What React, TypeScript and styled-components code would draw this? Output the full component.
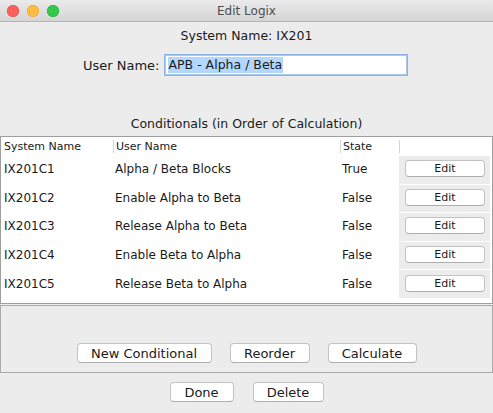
import React from 'react';
import styled, { createGlobalStyle } from 'styled-components';

const GlobalStyle = createGlobalStyle`
  html, body {
    margin: 0;
    padding: 0;
    background: #ececec;
  }
  body {
    font-family: "DejaVu Sans", "Liberation Sans", sans-serif;
    font-size: 12px;
    color: #1a1a1a;
  }
`;

const Window = styled.div`
  width: 493px;
  height: 413px;
  display: flex;
  flex-direction: column;
  background: #ececec;
  overflow: hidden;
`;

const TitleBar = styled.div`
  height: 21px;
  flex: none;
  display: flex;
  align-items: center;
  position: relative;
  background: linear-gradient(#ebebeb, #d5d5d5);
  border-bottom: 1px solid #b4b4b4;
`;

const Lights = styled.div`
  display: flex;
  gap: 8px;
  padding-left: 7px;
`;

const Light = styled.span<{ color: string; edge: string }>`
  width: 12px;
  height: 12px;
  border-radius: 50%;
  background: ${p => p.color};
  box-shadow: inset 0 0 0 0.5px ${p => p.edge};
`;

const Title = styled.div`
  position: absolute;
  left: 0;
  right: 0;
  text-align: center;
  font-size: 12px;
  color: #4d4d4d;
`;

const Body = styled.div`
  flex: 1;
  display: flex;
  flex-direction: column;
`;

const CenterLine = styled.div<{ top: number; height: number }>`
  margin-top: ${p => p.top}px;
  height: ${p => p.height}px;
  display: flex;
  align-items: center;
  justify-content: center;
  font-size: 12.5px;
`;

const NameRow = styled.div`
  margin-top: 11px;
  height: 20px;
  display: flex;
  align-items: center;
  padding-left: 83px;
  gap: 5px;
  font-size: 13px;
`;

const NameInput = styled.div`
  width: 236px;
  height: 16px;
  background: #fff;
  border: 1px solid #a9c9ec;
  box-shadow: 0 0 0 1px #8bb4e6;
  padding: 1px 2px;
  display: flex;
  align-items: center;
`;

const Selected = styled.span`
  background: #b3d7ff;
  line-height: 16px;
  padding: 0 1px;
  font-size: 12.5px;
`;

const TableBox = styled.div`
  margin-top: 5px;
  height: 166px;
  background: #fff;
  border: 1px solid #9e9e9e;
  display: flex;
  flex-direction: column;
`;

const Cols = '112px 227px 59px 1fr';

const HeaderRow = styled.div`
  display: grid;
  grid-template-columns: ${Cols};
  height: 18px;
  font-size: 11px;
  align-items: center;
`;

const HeadCell = styled.div<{ first?: boolean }>`
  height: 13px;
  line-height: 13px;
  padding-left: ${p => (p.first ? 3 : 2)}px;
  border-left: ${p => (p.first ? 'none' : '1px solid #d4d4d4')};
`;

const Row = styled.div`
  display: grid;
  grid-template-columns: ${Cols};
  height: 28.6px;
  font-size: 12px;
  align-items: center;
`;

const Cell = styled.div<{ first?: boolean }>`
  padding-left: ${p => (p.first ? 3 : 2)}px;
  white-space: nowrap;
`;

const ButtonCell = styled.div`
  align-self: stretch;
  background: #ececec;
  border-top: 1px solid #fff;
  margin-right: 2px;
  display: flex;
  align-items: center;
  padding-left: 6px;
`;

const Button = styled.button<{ w: number }>`
  width: ${p => p.w}px;
  height: 20px;
  background: #fff;
  border: 1px solid #c3c3c3;
  border-bottom-color: #adadad;
  border-radius: 4px;
  font-family: inherit;
  font-size: 13px;
  color: #1a1a1a;
  padding: 0;
`;

const EditButton = styled(Button)`
  height: 17px;
  font-size: 11px;
  margin-top: -2px;
`;

const ActionPanel = styled.div`
  margin-top: 1px;
  height: 68px;
  border: 1px solid #aaaaaa;
  display: flex;
  align-items: flex-end;
  justify-content: center;
  gap: 18px;
  padding-bottom: 9px;
  box-sizing: border-box;
`;

const BottomRow = styled.div`
  margin-top: 9px;
  display: flex;
  justify-content: center;
  gap: 19px;
`;

const rows = [
  ['IX201C1', 'Alpha / Beta Blocks', 'True'],
  ['IX201C2', 'Enable Alpha to Beta', 'False'],
  ['IX201C3', 'Release Alpha to Beta', 'False'],
  ['IX201C4', 'Enable Beta to Alpha', 'False'],
  ['IX201C5', 'Release Beta to Alpha', 'False'],
];

export default function App() {
  return (
    <Window>
      <GlobalStyle />
      <TitleBar>
        <Lights>
          <Light color="#fc605c" edge="#de4a45" />
          <Light color="#fdbc40" edge="#de9f34" />
          <Light color="#34c84a" edge="#27aa35" />
        </Lights>
        <Title>Edit Logix</Title>
      </TitleBar>
      <Body>
        <CenterLine top={4} height={18}>System Name: IX201</CenterLine>
        <NameRow>
          <span>User Name:</span>
          <NameInput>
            <Selected>APB - Alpha / Beta</Selected>
          </NameInput>
        </NameRow>
        <CenterLine top={40} height={16}>Conditionals (in Order of Calculation)</CenterLine>
        <TableBox>
          <HeaderRow>
            <HeadCell first>System Name</HeadCell>
            <HeadCell>User Name</HeadCell>
            <HeadCell>State</HeadCell>
            <HeadCell />
          </HeaderRow>
          {rows.map(([sys, user, state]) => (
            <Row key={sys}>
              <Cell first>{sys}</Cell>
              <Cell>{user}</Cell>
              <Cell>{state}</Cell>
              <ButtonCell>
                <EditButton w={80}>Edit</EditButton>
              </ButtonCell>
            </Row>
          ))}
        </TableBox>
        <ActionPanel>
          <Button w={135}>New Conditional</Button>
          <Button w={80}>Reorder</Button>
          <Button w={89}>Calculate</Button>
        </ActionPanel>
        <BottomRow>
          <Button w={64}>Done</Button>
          <Button w={71}>Delete</Button>
        </BottomRow>
      </Body>
    </Window>
  );
}
